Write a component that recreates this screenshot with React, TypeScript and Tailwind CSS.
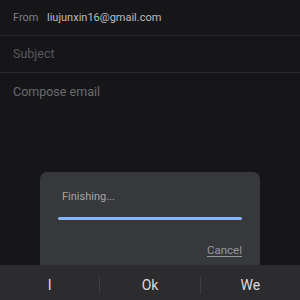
import React from "react";

export default function App() {
  return (
    <div
      className="relative w-[300px] h-[300px] overflow-hidden bg-[#161618] flex flex-col"
      style={{ fontFamily: "Roboto, 'Liberation Sans', sans-serif" }}
    >
      <div className="flex-1 flex flex-col">
        <div className="h-[36px] flex items-center px-[13px] pt-[2px] border-b border-[#2a2a2d]">
          <span className="text-[11px] text-[#7f7f84] w-[34px]">From</span>
          <span className="text-[11px] text-[#bcbcc0]">liujunxin16@gmail.com</span>
        </div>
        <div className="h-[37px] flex items-center px-[13px] border-b border-[#2a2a2d]">
          <span className="text-[12.5px] leading-[18px] text-[#58585c]">Subject</span>
        </div>
        <div className="px-[13px] pt-[6px]">
          <span className="text-[12.5px] leading-[18px] text-[#6a6a6e]">Compose email</span>
        </div>
      </div>

      <div className="absolute left-[40px] top-[172px] w-[220px] h-[120px] rounded-[7px] bg-[#37383b] px-[18px] pt-[18px]">
        <div className="text-[11px] leading-[14px] text-[#a4a4a8] pl-[4px]">Finishing...</div>
        <div className="mt-[13px] h-[3px] rounded-full bg-[#8ab4f8]" />
        <div className="mt-[23px] flex justify-end">
          <span className="text-[11.5px] leading-[14px] text-[#96969b] underline underline-offset-2">Cancel</span>
        </div>
      </div>

      <div className="relative z-10 h-[35px] bg-[#2c2c2e] flex items-center pt-[4px]">
        <div className="flex-1 flex justify-center text-[14px] leading-[18px] text-[#dcdcde]">I</div>
        <div className="w-px h-[18px] bg-[#3e3e41]" />
        <div className="flex-1 flex justify-center text-[14px] leading-[18px] text-[#dcdcde]">Ok</div>
        <div className="w-px h-[18px] bg-[#3e3e41]" />
        <div className="flex-1 flex justify-center text-[14px] leading-[18px] text-[#dcdcde]">We</div>
      </div>
    </div>
  );
}
